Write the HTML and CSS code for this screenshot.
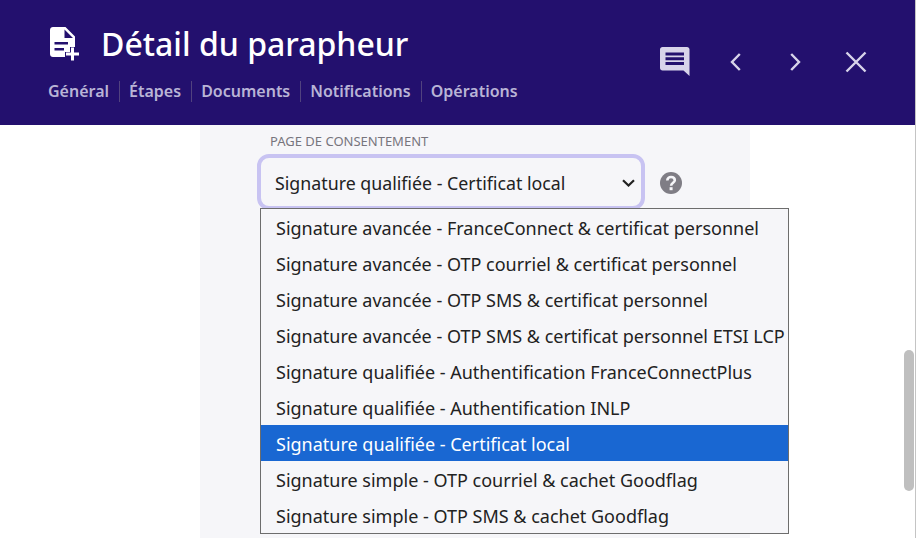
FILE: index.html
```html
<!doctype html>
<html lang="fr">
  <head>
    <meta charset="utf-8">
    <title>Détail du parapheur</title>
    <link rel="stylesheet" href="styles.css">
  </head>
  <body>
    <div class="header">
      <div class="header_left">
        <div class="title_row">
          <svg class="title_icon" viewBox="0 0 30 34" width="30" height="34">
            <path fill="#fff" d="M3 0H15.500L25 9.500V20H20V25H15V30H3C1.300 30 0 28.700 0 27V3C0 1.300 1.300 0 3 0Z"/>
            <path fill="#23106e" d="M14.500 2.500V11H23ZM4.500 15H18V17.500H4.500ZM4.500 21H14V23.500H4.500Z"/>
            <path fill="#fff" d="M21 20.500H24V25.500H29V28.500H24V33.500H21V28.500H16V25.500H21Z"/>
          </svg>
          <h1>Détail du parapheur</h1>
        </div>
        <ul class="tabs">
          <li>Général</li>
          <li>Étapes</li>
          <li>Documents</li>
          <li>Notifications</li>
          <li>Opérations</li>
        </ul>
      </div>
      <div class="actions">
        <svg class="comment_icon" viewBox="0 0 30 30" width="30" height="30">
          <path fill="#d8d4ea" d="M2.500 0H27C28.400 0 29.500 1.100 29.500 2.500V29L23.500 23.500H2.500C1.100 23.500 0 22.400 0 21V2.500C0 1.100 1.100 0 2.500 0Z"/>
          <path fill="#23106e" d="M5.500 5.500H24V8.500H5.500ZM5.500 10.200H24V13.200H5.500ZM5.500 15H24V18H5.500Z"/>
        </svg>
        <svg class="prev_icon" viewBox="0 0 11 18" width="11" height="18">
          <path fill="none" stroke="#d8d4ea" stroke-width="2.400" d="M9.800 1L2 9L9.800 17"/>
        </svg>
        <svg class="next_icon" viewBox="0 0 11 18" width="11" height="18">
          <path fill="none" stroke="#d8d4ea" stroke-width="2.400" d="M1.200 1L9 9L1.200 17"/>
        </svg>
        <svg class="close_icon" viewBox="0 0 22 22" width="22" height="22">
          <path fill="none" stroke="#d8d4ea" stroke-width="2.400" d="M1.500 1.500L20.500 20.500M20.500 1.500L1.500 20.500"/>
        </svg>
      </div>
    </div>

    <div class="content">
      <div class="panel">
        <div class="field_label">PAGE DE CONSENTEMENT</div>
        <div class="field_row">
          <div class="select_box">
            <span>Signature qualifiée - Certificat local</span>
            <svg class="chevron" viewBox="0 0 13 8" width="13" height="8">
              <path fill="none" stroke="#222" stroke-width="2.200" d="M1 1.200L6.500 6.500L12 1.200"/>
            </svg>
          </div>
          <svg class="help_icon" viewBox="0 0 22 22" width="22" height="22">
            <circle cx="11" cy="11" r="11" fill="#7f7d85"/>
            <path fill="none" stroke="#f6f6f9" stroke-width="2.600" d="M7.300 8.500C7.300 6.300 9 5 11 5C13.200 5 14.800 6.300 14.800 8.200C14.800 10.700 11.100 10.800 11.100 13.700"/>
            <rect x="9.600" y="15.200" width="3" height="3" fill="#f6f6f9"/>
          </svg>
        </div>
        <ul class="options">
          <li>Signature avancée - FranceConnect &amp; certificat personnel</li>
          <li>Signature avancée - OTP courriel &amp; certificat personnel</li>
          <li>Signature avancée - OTP SMS &amp; certificat personnel</li>
          <li>Signature avancée - OTP SMS &amp; certificat personnel ETSI LCP</li>
          <li>Signature qualifiée - Authentification FranceConnectPlus</li>
          <li>Signature qualifiée - Authentification INLP</li>
          <li class="selected">Signature qualifiée - Certificat local</li>
          <li>Signature simple - OTP courriel &amp; cachet Goodflag</li>
          <li>Signature simple - OTP SMS &amp; cachet Goodflag</li>
        </ul>
      </div>
    </div>
    <div class="scroll_thumb"></div>
  </body>
</html>
```

FILE: styles.css
```css
html, body {
  margin: 0;
  padding: 0;
  height: 100%;
  overflow: hidden;
}

body {
  display: flex;
  flex-direction: column;
  background: #fff;
  font-family: "Noto Sans", "Open Sans", sans-serif;
  color: #222;
  border-right: 1px solid #c4c4c4;
  box-sizing: border-box;
}

.header {
  display: flex;
  justify-content: space-between;
  height: 125px;
  flex: none;
  background: #23106e;
  padding: 0 48px;
  box-sizing: border-box;
}

.title_row {
  display: flex;
  align-items: center;
  gap: 21px;
  padding: 25px 0 0 2px;
}

.title_icon {
  flex: none;
}

h1 {
  margin: 0;
  font-size: 32px;
  line-height: 38px;
  font-weight: 500;
  color: #fff;
}

.tabs {
  display: flex;
  list-style: none;
  margin: 18px 0 0;
  padding: 0;
}

.tabs li {
  font-size: 16px;
  line-height: 21px;
  font-weight: 600;
  color: #b9b4d6;
  padding: 0 10px 0 9px;
  border-left: 1px solid #51427f;
}

.tabs li:first-child {
  padding-left: 0;
  border-left: 0;
}

.actions {
  display: flex;
  align-items: center;
  height: 124px;
}

.prev_icon {
  margin-left: 40px;
}

.next_icon {
  margin-left: 49px;
}

.close_icon {
  margin-left: 44px;
}

.content {
  flex: 1;
  padding-left: 200px;
}

.panel {
  position: relative;
  width: 550px;
  height: 100%;
  background: #f6f6f9;
  padding: 8px 0 0 57px;
  box-sizing: border-box;
}

.field_label {
  padding-left: 13px;
  font-size: 13px;
  line-height: 17px;
  color: #77757d;
}

.field_row {
  display: flex;
  align-items: center;
  gap: 15px;
  margin-top: 4px;
}

.select_box {
  display: flex;
  align-items: center;
  justify-content: space-between;
  width: 388px;
  height: 56px;
  padding: 2px 6px 0 14px;
  box-sizing: border-box;
  border: 4px solid #c8c3f2;
  border-radius: 12px;
  font-size: 17.800px;
}

.help_icon {
  margin-top: 2px;
}

.options {
  position: absolute;
  top: 83px;
  left: 60px;
  width: 529px;
  margin: 0;
  padding: 0;
  list-style: none;
  background: #f6f6f9;
  border: 1px solid #6d6d6d;
  box-sizing: border-box;
}

.options li {
  height: 36px;
  line-height: 38px;
  padding-left: 15px;
  font-size: 18px;
  white-space: nowrap;
}

.options li.selected {
  background: #1967d2;
  color: #fff;
}

.scroll_thumb {
  position: absolute;
  top: 350px;
  right: 2px;
  width: 10px;
  height: 141px;
  border-radius: 5px;
  background: #bfbfbf;
}
```
